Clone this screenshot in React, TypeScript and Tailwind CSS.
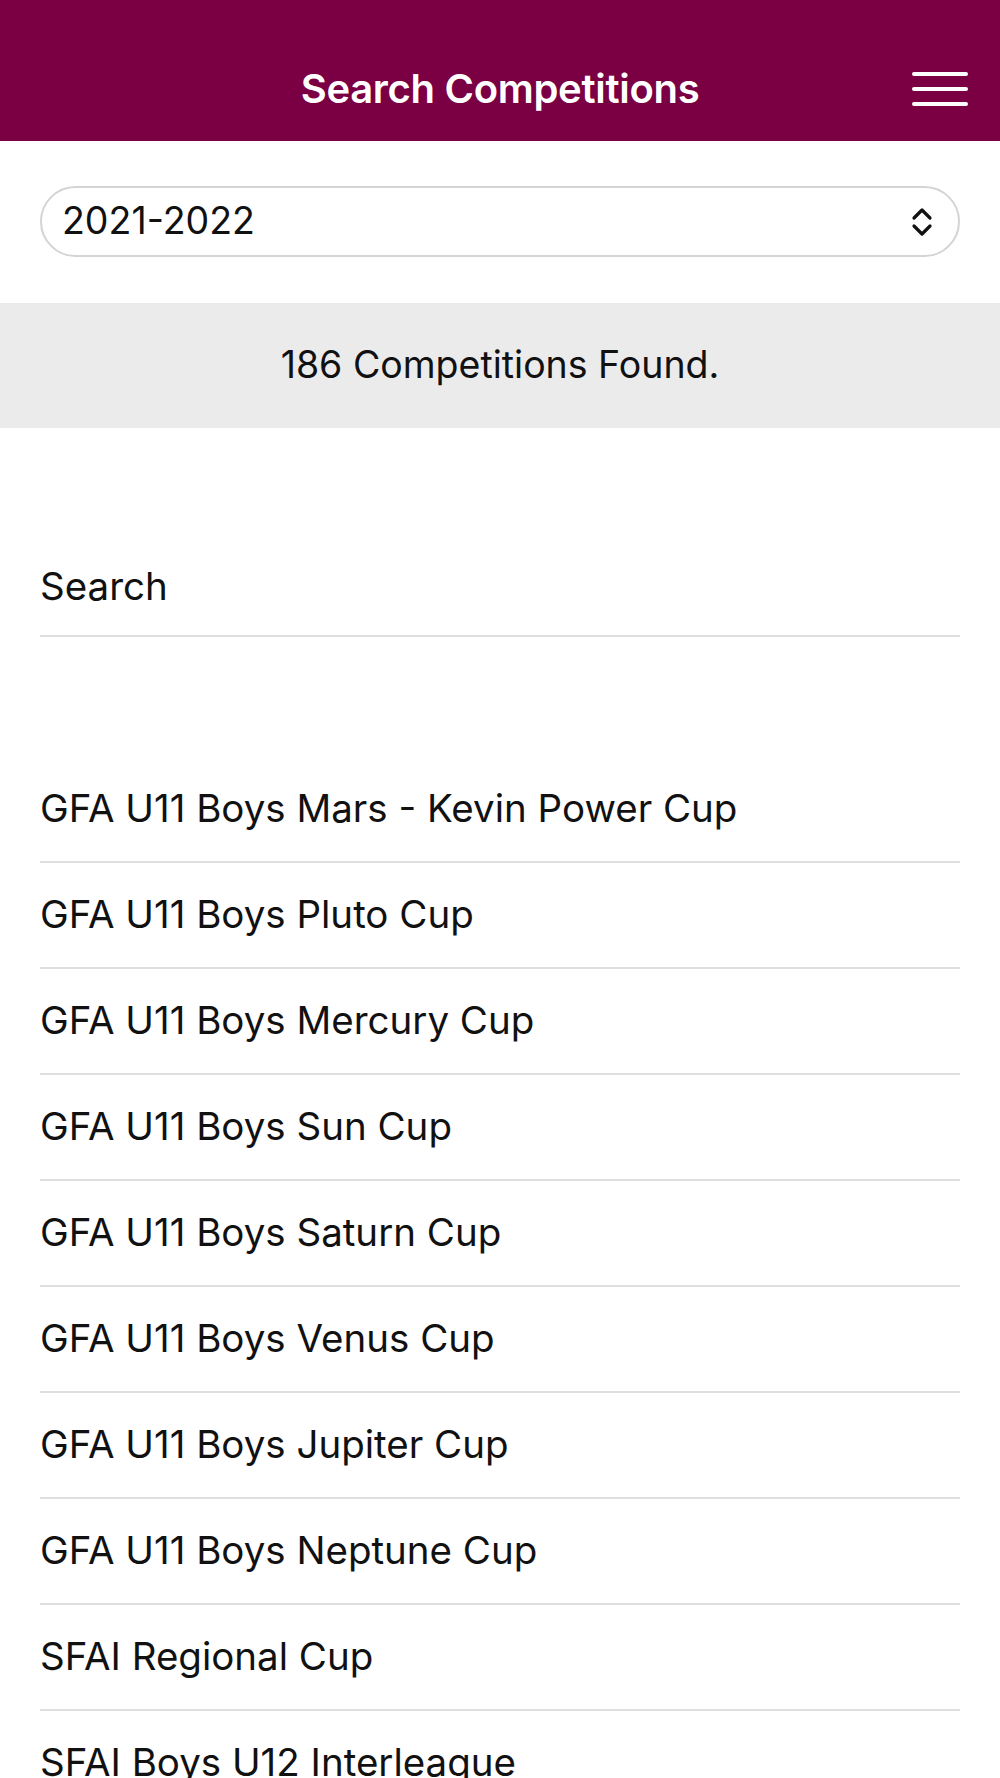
import React from 'react';

const competitions = [
  'GFA U11 Boys Mars - Kevin Power Cup',
  'GFA U11 Boys Pluto Cup',
  'GFA U11 Boys Mercury Cup',
  'GFA U11 Boys Sun Cup',
  'GFA U11 Boys Saturn Cup',
  'GFA U11 Boys Venus Cup',
  'GFA U11 Boys Jupiter Cup',
  'GFA U11 Boys Neptune Cup',
  'SFAI Regional Cup',
  'SFAI Boys U12 Interleague',
];

export default function App() {
  return (
    <div
      className="w-[1000px] h-[1778px] overflow-hidden bg-white text-[#111]"
      style={{ fontFamily: 'Inter, "Liberation Sans", sans-serif' }}
    >
      {/* Header */}
      <div className="relative h-[141px] bg-[#7b0043] pt-[36px] flex items-center justify-center">
        <h1 className="text-[40px] font-semibold text-white tracking-[-0.3px]">Search Competitions</h1>
        <button className="absolute right-[32px] top-[72px] w-[56px] flex flex-col gap-[11px]">
          <span className="block h-[4px] w-full rounded-full bg-white" />
          <span className="block h-[4px] w-full rounded-full bg-white" />
          <span className="block h-[4px] w-full rounded-full bg-white" />
        </button>
      </div>

      {/* Season select */}
      <div className="px-[40px] pt-[45px]">
        <div className="h-[71px] rounded-full border-2 border-[#d4d4d4] flex items-center justify-between pl-[20px] pr-[24px]">
          <span className="text-[37.5px]">2021-2022</span>
          <svg width="24" height="32" viewBox="0 0 24 32" fill="none" stroke="#111" strokeWidth="3.2" strokeLinecap="round" strokeLinejoin="round">
            <path d="M4 12 L12 4 L20 12" />
            <path d="M4 20 L12 28 L20 20" />
          </svg>
        </div>
      </div>

      {/* Count */}
      <div className="mt-[46px] h-[125px] bg-[#ebebeb] flex items-center justify-center">
        <span className="text-[37.5px]">186 Competitions Found.</span>
      </div>

      {/* Search */}
      <div className="px-[40px] pt-[103px]">
        <div className="h-[106px] border-b-2 border-[#dedede] flex items-center pt-[8px]">
          <span className="text-[38.5px]">Search</span>
        </div>
      </div>

      {/* List */}
      <ul className="px-[40px] pt-[120px]">
        {competitions.map((name) => (
          <li key={name} className="h-[106px] border-b-2 border-[#dedede] flex items-center">
            <span className="text-[38.5px]">{name}</span>
          </li>
        ))}
      </ul>
    </div>
  );
}
